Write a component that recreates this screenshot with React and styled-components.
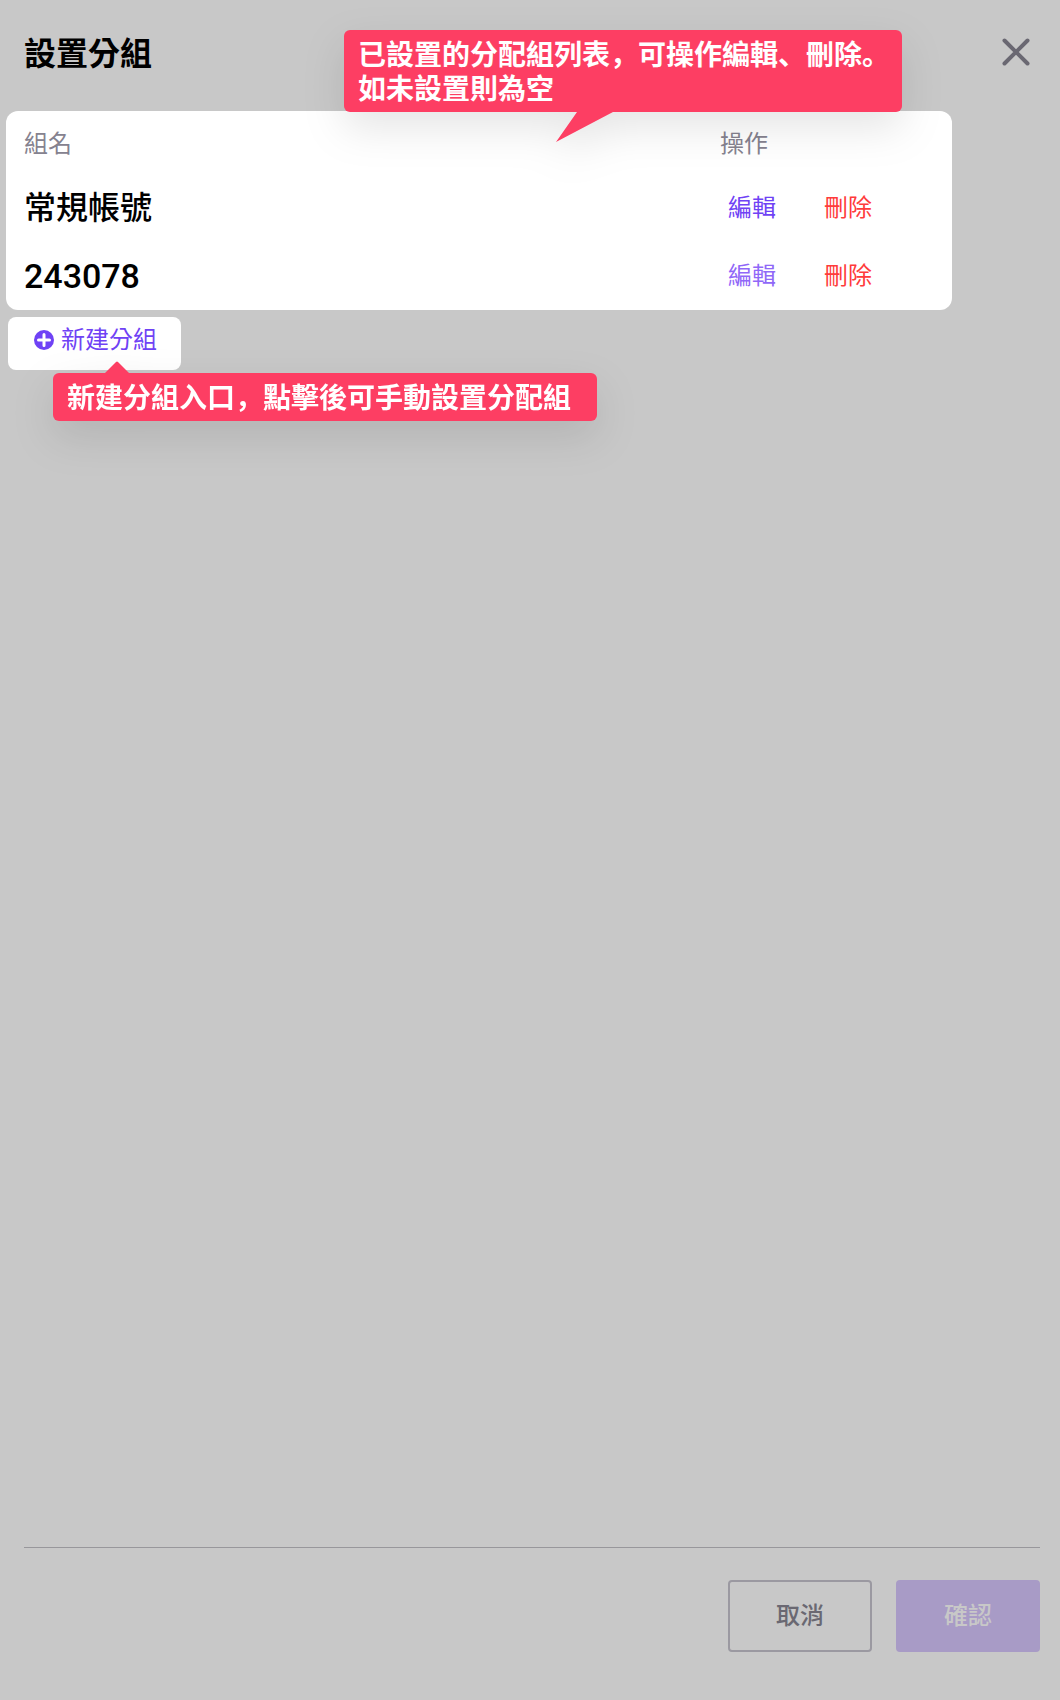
import React from "react";
import styled, { createGlobalStyle } from "styled-components";

const GlobalStyle = createGlobalStyle`
  *, *::before, *::after { box-sizing: border-box; }
  body {
    margin: 0;
    background: #c8c8c8;
    color: #000;
    font-family: Roboto, "Noto Sans CJK TC", sans-serif;
  }
  button { font-family: inherit; margin: 0; border: 0; background: none; padding: 0; cursor: pointer; }
`;

const Panel = styled.main`
  display: flex;
  flex-direction: column;
  min-height: 100vh;
`;

const Header = styled.header`
  display: flex;
  align-items: center;
  justify-content: space-between;
  height: 111px;
  padding: 0 28px 8px 24px;
`;

const Title = styled.h1`
  margin: 0;
  padding-top: 4px;
  font-size: 32px;
  line-height: 40px;
  font-weight: 700;
`;

const CloseButton = styled.button`
  display: flex;
  color: #6a6872;
`;

const Content = styled.section`
  flex: 1;
  display: flex;
  flex-direction: column;
  align-items: flex-start;
  gap: 7px;
  padding: 0 108px 0 6px;
`;

const Card = styled.div`
  position: relative;
  align-self: stretch;
  padding-bottom: 1px;
  background: #fff;
  border-radius: 12px;
`;

const GroupTable = styled.table`
  width: 100%;
  table-layout: fixed;
  border-collapse: collapse;
  text-align: left;
`;

const HeadCell = styled.th`
  width: ${(p) => p.$width || "auto"};
  height: 62px;
  padding: 4px 0 0 18px;
  font-size: 24px;
  line-height: 32px;
  font-weight: 400;
  color: #85828f;
`;

const Cell = styled.td`
  height: 68px;
  padding: 2px 0 0 18px;
  font-size: ${(p) => (p.$numeric ? 34 : 32)}px;
  line-height: 40px;
  font-weight: 500;
`;

const Actions = styled.div`
  display: flex;
  gap: 48px;
  padding-left: 8px;
`;

const tones = { edit: "#6f42f5", editHover: "#9068f8", remove: "#ff3b3b" };

const TextButton = styled.button`
  font-size: 24px;
  line-height: 32px;
  color: ${(p) => tones[p.$tone]};
`;

const AddBox = styled.div`
  position: relative;
  margin-left: 2px;
  padding: 7px 24px 14px 26px;
  background: #fff;
  border-radius: 8px;
`;

const AddButton = styled.button`
  display: flex;
  align-items: center;
  gap: 7px;
  font-size: 24px;
  line-height: 32px;
  color: #6f42f5;
`;

const Callout = styled.div`
  position: absolute;
  z-index: 1;
  top: ${(p) => p.$top}px;
  left: ${(p) => p.$left}px;
  width: ${(p) => p.$width}px;
  padding: 9px 14px 5px;
  border-radius: 6px;
  background: #fd3e63;
  color: #fff;
  font-family: Roboto, "Noto Sans CJK SC", sans-serif;
  font-size: 28px;
  line-height: 34px;
  font-weight: 700;
  white-space: nowrap;
  filter: drop-shadow(0 16px 20px rgba(0, 0, 0, 0.1));
`;

const Pointer = styled.svg`
  position: absolute;
  top: ${(p) => p.$top}px;
  left: ${(p) => p.$left}px;
  fill: #fd3e63;
`;

const Footer = styled.footer`
  display: flex;
  justify-content: flex-end;
  gap: 24px;
  margin: 0 20px 0 24px;
  padding: 32px 0 48px;
  border-top: 1px solid #98979b;
`;

const FooterButton = styled.button`
  width: 144px;
  height: 72px;
  border-radius: 4px;
  font-size: 24px;
  line-height: 32px;
  font-weight: 500;
  color: ${(p) => (p.$primary ? "#c8c8c8" : "#6a6872")};
  background: ${(p) => (p.$primary ? "#a89bc6" : "transparent")};
  border: ${(p) => (p.$primary ? "0" : "2px solid #9b99a1")};
`;

const groups = [
  { name: "常規帳號", tone: "edit" },
  { name: "243078", tone: "editHover", numeric: true },
];

export default function App() {
  return (
    <>
      <GlobalStyle />
      <Panel>
        <Header>
          <Title>設置分組</Title>
          <CloseButton type="button" aria-label="關閉">
            <svg width="32" height="32" viewBox="0 0 32 32" fill="none" stroke="currentColor" strokeWidth="4" strokeLinecap="round">
              <path d="M4.500 4.500L27.500 27.500M27.500 4.500L4.500 27.500" />
            </svg>
          </CloseButton>
        </Header>
        <Content>
          <Card>
            <GroupTable>
              <thead>
                <tr>
                  <HeadCell scope="col">組名</HeadCell>
                  <HeadCell scope="col" $width="250px">操作</HeadCell>
                </tr>
              </thead>
              <tbody>
                {groups.map((group) => (
                  <tr key={group.name}>
                    <Cell $numeric={group.numeric}>{group.name}</Cell>
                    <Cell>
                      <Actions>
                        <TextButton type="button" $tone={group.tone}>編輯</TextButton>
                        <TextButton type="button" $tone="remove">刪除</TextButton>
                      </Actions>
                    </Cell>
                  </tr>
                ))}
              </tbody>
            </GroupTable>
            <Callout role="note" $top={-81} $left={338} $width={558}>
              已設置的分配組列表，可操作編輯、刪除。
              <br />
              如未設置則為空
              <Pointer $top={81} $left={212} width="60" height="31" viewBox="0 0 60 31" aria-hidden="true">
                <path d="M22 0H60L57 1L0 31L21 1Z" />
              </Pointer>
            </Callout>
          </Card>
          <AddBox>
            <AddButton type="button">
              <svg width="20" height="20" viewBox="0 0 20 20" aria-hidden="true">
                <circle cx="10" cy="10" r="10" fill="currentColor" />
                <path d="M10 4.500V15.500M4.500 10H15.500" stroke="#fff" strokeWidth="3" strokeLinecap="round" />
              </svg>
              新建分組
            </AddButton>
            <Callout role="note" $top={56} $left={45} $width={544}>
              新建分組入口，點擊後可手動設置分配組
              <Pointer $top={-12} $left={52} width="25" height="13" viewBox="0 0 25 13" aria-hidden="true">
                <path d="M0 12L11 1Q12 0 13 1L25 13H0Z" />
              </Pointer>
            </Callout>
          </AddBox>
        </Content>
        <Footer>
          <FooterButton type="button">取消</FooterButton>
          <FooterButton type="button" $primary>確認</FooterButton>
        </Footer>
      </Panel>
    </>
  );
}
